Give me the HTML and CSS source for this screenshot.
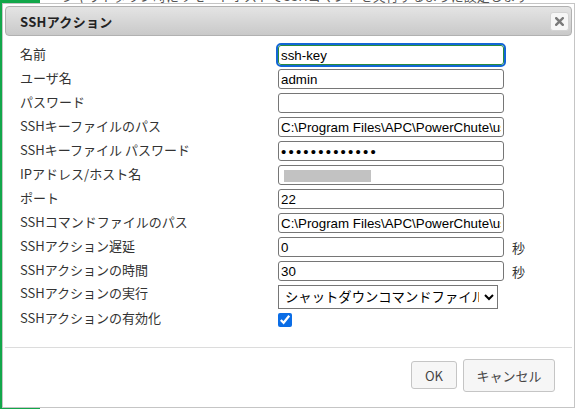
FILE: index.html
```html
<!DOCTYPE html>
<html lang="ja">
<head>
    <meta charset="UTF-8">
    <meta name="viewport" content="width=device-width, initial-scale=1.0">
    <title>SSHアクション</title>
    <link rel="stylesheet" href="styles.css">
</head>
<body>
    <div class="page">
        <div class="page-side"></div>
        <p class="page-intro">シャットダウン時にリモートホストでSSHコマンドを実行するように設定します</p>

        <div class="dialog">
            <div class="dialog-title">
                <span class="dialog-title-text">SSHアクション</span>
                <button class="btn-close" title="閉じる">
                    <svg width="9" height="9" viewBox="0 0 9 9">
                        <path d="M1.2 1.2 L7.8 7.8 M7.8 1.2 L1.2 7.8" stroke="#7a7a7a" stroke-width="2.4" stroke-linecap="square"/>
                    </svg>
                </button>
            </div>

            <form class="dialog-content" action="#">
                <label class="label" for="name">名前</label>
                <input class="field field-focus" type="text" id="name" value="ssh-key">
                <span></span>

                <label class="label" for="user">ユーザ名</label>
                <input class="field" type="text" id="user" value="admin">
                <span></span>

                <label class="label" for="pass">パスワード</label>
                <input class="field" type="password" id="pass">
                <span></span>

                <label class="label" for="keypath">SSHキーファイルのパス</label>
                <input class="field" type="text" id="keypath" value="C:\Program Files\APC\PowerChute\user_files\ssh\id_rsa">
                <span></span>

                <label class="label" for="keypass">SSHキーファイル パスワード</label>
                <input class="field field-secret" type="password" id="keypass" value="passphrase012">
                <span></span>

                <label class="label" for="host">IPアドレス/ホスト名</label>
                <input class="field field-redacted" type="text" id="host" value="">
                <span></span>

                <label class="label" for="port">ポート</label>
                <input class="field" type="text" id="port" value="22">
                <span></span>

                <label class="label" for="cmdpath">SSHコマンドファイルのパス</label>
                <input class="field" type="text" id="cmdpath" value="C:\Program Files\APC\PowerChute\user_files\ssh\cmd.txt">
                <span></span>

                <label class="label" for="delay">SSHアクション遅延</label>
                <input class="field" type="text" id="delay" value="0">
                <span class="unit">秒</span>

                <label class="label" for="duration">SSHアクションの時間</label>
                <input class="field" type="text" id="duration" value="30">
                <span class="unit">秒</span>

                <label class="label label-top" for="run">SSHアクションの実行</label>
                <select class="select" id="run">
                    <option>シャットダウンコマンドファイルの前</option>
                    <option>シャットダウンコマンドファイルの後</option>
                </select>
                <span></span>

                <label class="label" for="enabled">SSHアクションの有効化</label>
                <input class="check" type="checkbox" id="enabled" checked>
                <span></span>
            </form>

            <div class="dialog-buttons">
                <button class="btn btn-ok">OK</button>
                <button class="btn btn-cancel">キャンセル</button>
            </div>
        </div>
    </div>
</body>
</html>
```

FILE: styles.css
```css
*,
*::after,
*::before {
    box-sizing: border-box;
}
body {
    margin: 0;
    background: #fff;
    font-family: "Noto Sans CJK JP", "Noto Sans", sans-serif;
}
.page {
    position: relative;
    width: 575px;
    height: 409px;
    overflow: hidden;
}
.page-side {
    position: absolute;
    left: 0;
    top: 0;
    width: 40px;
    height: 409px;
    background: #12a74a;
}
.page-intro {
    position: absolute;
    left: 62px;
    top: -12px;
    margin: 0;
    font-size: 13px;
    line-height: 15px;
    color: #555;
    white-space: nowrap;
}
.dialog {
    position: absolute;
    left: 2px;
    top: 3px;
    width: 573px;
    height: 405px;
    padding: 2px;
    display: flex;
    flex-direction: column;
    background: #fff;
    border: 1px solid #c5c5c5;
}
.dialog-title {
    display: flex;
    align-items: center;
    justify-content: space-between;
    height: 30px;
    padding: 0 2px 0 14px;
    border: 1px solid #b1b1b1;
    border-radius: 4px;
    background: linear-gradient(#e4e4e4, #c9c9c9);
}
.dialog-title-text {
    font-size: 13px;
    font-weight: bold;
    color: #222;
    letter-spacing: 0.3px;
}
.btn-close {
    display: flex;
    align-items: center;
    justify-content: center;
    width: 19px;
    height: 19px;
    padding: 0;
    border: 1px solid #d3d3d3;
    border-radius: 3px;
    background: #f6f6f6;
}
.dialog-content {
    flex-grow: 1;
    display: grid;
    grid-template-columns: 250px 226px auto;
    grid-auto-rows: 20px;
    row-gap: 4px;
    column-gap: 8px;
    align-items: center;
    align-content: start;
    margin: 0;
    padding: 9px 0 0 15px;
}
.label {
    font-size: 13px;
    line-height: 16px;
    color: #333;
    white-space: nowrap;
    margin-top: -2px;
}
.label-top {
    align-self: start;
    margin-top: 0;
}
.field {
    width: 226px;
    height: 20px;
    margin: 0;
    padding: 0 2px;
    border: 1px solid #767676;
    border-radius: 3px;
    font-family: "Liberation Sans", Arial, sans-serif;
    font-size: 13.33px;
    color: #000;
    background: #fff;
}
.field-focus {
    border-color: #2a8c3c;
    outline: 2px solid #1366d6;
    outline-offset: 0;
}
.field-secret {
    font-size: 15px;
    letter-spacing: 2.2px;
}
.field-redacted {
    background: #fff linear-gradient(#c2c2c2, #c2c2c2) no-repeat 5px 4px / 87px 12px;
}
.unit {
    font-size: 13px;
    color: #333;
}
.select {
    height: 24px;
    width: 220px;
    margin: 0 0 -4px;
    padding: 0 2px;
    border: 1px solid #767676;
    border-radius: 0;
    background: #fff;
    font-family: "Liberation Sans", "Noto Sans CJK JP", sans-serif;
    font-size: 13.33px;
    color: #000;
    align-self: start;
}
.check {
    width: 14px;
    height: 14px;
    margin: 2px 0 0;
    accent-color: #0b6de6;
}
.dialog-buttons {
    display: flex;
    justify-content: flex-end;
    align-items: center;
    gap: 6px;
    height: 58px;
    padding: 10px 17px 13px 0;
    border-top: 1px solid #dcdcdc;
}
.btn {
    padding: 0;
    border: 1px solid #c5c5c5;
    border-radius: 3px;
    background: #f6f6f6;
    color: #454545;
    font-family: "Noto Sans CJK JP", "Noto Sans", sans-serif;
    font-size: 13px;
    white-space: nowrap;
    cursor: pointer;
}
.btn-ok {
    width: 46px;
    height: 28px;
}
.btn-cancel {
    width: 92px;
    height: 33px;
}
```
